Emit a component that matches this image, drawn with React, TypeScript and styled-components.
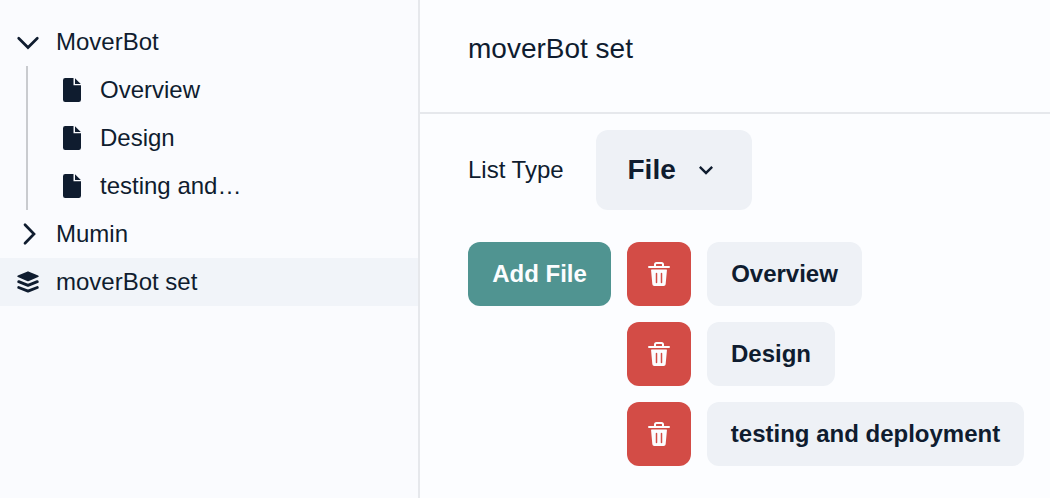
import React from 'react';
import styled, { createGlobalStyle, css } from 'styled-components';

const GlobalStyle = createGlobalStyle`
  * { box-sizing: border-box; }
  body {
    margin: 0;
    background: #fcfdff;
    color: #0f1c2f;
    font-family: "Liberation Sans", Arial, sans-serif;
    overflow: hidden;
  }
`;

const Layout = styled.div`
  display: flex;
  width: 100vw;
  height: 100vh;
`;

const Sidebar = styled.nav`
  flex: none;
  width: 420px;
  padding-top: 18px;
  border-right: 2px solid #e6e8ec;
  background: #fafbfe;
`;

const TreeRow = styled.div<{ $active?: boolean; $nested?: boolean }>`
  display: flex;
  align-items: center;
  gap: 16px;
  height: 48px;
  padding-left: ${({ $nested }) => ($nested ? '32px' : '16px')};
  font-size: 24px;
  line-height: 36px;
  ${({ $active }) => $active && css`background: #f1f4f9;`}
`;

const TreeIcon = styled.span`
  display: flex;
  justify-content: center;
  width: 24px;
`;

const Branch = styled.div`
  margin-left: 26px;
  border-left: 2px solid #c9cbcf;
`;

const TreeLabel = styled.span`
  white-space: nowrap;
`;

const Main = styled.main`
  flex: 1;
  min-width: 0;
`;

const Header = styled.header`
  height: 114px;
  padding: 28px 48px 0;
  border-bottom: 2px solid #e6e8ec;
`;

const Title = styled.h1`
  margin: 0;
  font-size: 28px;
  font-weight: 400;
  line-height: 42px;
`;

const Content = styled.section`
  padding: 16px 0 0 48px;
`;

const Field = styled.div`
  display: flex;
  align-items: center;
  gap: 32px;
  font-size: 24px;
`;

const Button = styled.button<{ $tone?: 'primary' | 'danger'; $large?: boolean; $width: number }>`
  display: flex;
  align-items: center;
  justify-content: center;
  flex: none;
  width: ${({ $width }) => $width}px;
  height: ${({ $large }) => ($large ? 80 : 64)}px;
  padding: 0;
  gap: 16px;
  border: 0;
  border-radius: 12px;
  font: 700 ${({ $large }) => ($large ? 28 : 24)}px "Liberation Sans", Arial, sans-serif;
  white-space: nowrap;
  color: ${({ $tone }) => ($tone ? '#fcfdff' : '#0f1c2f')};
  background: ${({ $tone }) =>
    $tone === 'primary' ? '#509491' : $tone === 'danger' ? '#d34c46' : '#eef1f6'};
`;

const FileArea = styled.div`
  display: flex;
  align-items: flex-start;
  gap: 16px;
  margin-top: 32px;
`;

const FileList = styled.div`
  display: flex;
  flex-direction: column;
  gap: 16px;
`;

const FileRow = styled.div`
  display: flex;
  gap: 16px;
`;

const Chevron = ({ right = false }: { right?: boolean }) => (
  <svg
    width="24"
    height="24"
    viewBox="0 0 24 24"
    fill="none"
    stroke="currentColor"
    strokeWidth="2.7"
    strokeLinecap="round"
  >
    <path d={right ? 'M9 2.7 18 12 9 21.3' : 'M2.7 8.3 12 17.5 21.3 8.3'} />
  </svg>
);

const DocumentIcon = () => (
  <svg width="18" height="24" viewBox="0 0 18 24" fill="currentColor">
    <path d="M2.2 0H10.5V7.3H18V21.8A2.2 2.2 0 0 1 15.8 24H2.2A2.2 2.2 0 0 1 0 21.8V2.2A2.2 2.2 0 0 1 2.2 0Z" />
    <path d="M12 .3 17.8 6H12Z" />
  </svg>
);

const LayersIcon = () => (
  <svg width="24" height="24" viewBox="0 0 24 24" stroke="currentColor" strokeLinejoin="round" strokeLinecap="round">
    <path d="M12 2.2 21.8 6.3 12 10.4 2.2 6.3Z" fill="currentColor" strokeWidth="1.7" />
    <path d="M2.7 11.7 12 15.3 21.3 11.7" fill="none" strokeWidth="2.9" />
    <path d="M2.7 17.5 12 21.1 21.3 17.5" fill="none" strokeWidth="2.9" />
  </svg>
);

const SelectArrow = () => (
  <svg width="28" height="28" viewBox="0 0 24 24" fill="currentColor">
    <path d="M16.59 8.59 12 13.17 7.41 8.59 6 10l6 6 6-6z" />
  </svg>
);

const Trash = () => (
  <svg width="24" height="24" viewBox="0 0 24 24" fill="currentColor">
    <path d="M19.452 7.5H4.547a.5.5 0 00-.5.545l1.287 14.136A2 2 0 007.326 24h9.347a2 2 0 001.992-1.819L19.95 8.045a.5.5 0 00-.129-.382.5.5 0 00-.369-.163zm-9.2 13a.75.75 0 01-1.5 0v-9a.75.75 0 011.5 0zm5 0a.75.75 0 01-1.5 0v-9a.75.75 0 011.5 0zM22 4h-4.75a.25.25 0 01-.25-.25V2.5A2.5 2.5 0 0014.5 0h-5A2.5 2.5 0 007 2.5v1.25a.25.25 0 01-.25.25H2a1 1 0 000 2h20a1 1 0 000-2zM9 3.75V2.5a.5.5 0 01.5-.5h5a.5.5 0 01.5.5v1.25a.25.25 0 01-.25.25h-5.5A.25.25 0 019 3.75z" />
  </svg>
);

const pages = ['Overview', 'Design', 'testing and…'];
const files = [
  { name: 'Overview', width: 155 },
  { name: 'Design', width: 128 },
  { name: 'testing and deployment', width: 317 },
];

export default function App() {
  return (
    <Layout>
      <GlobalStyle />
      <Sidebar>
        <TreeRow>
          <TreeIcon><Chevron /></TreeIcon>
          <TreeLabel>MoverBot</TreeLabel>
        </TreeRow>
        <Branch>
          {pages.map((page) => (
            <TreeRow key={page} $nested>
              <TreeIcon><DocumentIcon /></TreeIcon>
              <TreeLabel>{page}</TreeLabel>
            </TreeRow>
          ))}
        </Branch>
        <TreeRow>
          <TreeIcon><Chevron right /></TreeIcon>
          <TreeLabel>Mumin</TreeLabel>
        </TreeRow>
        <TreeRow $active>
          <TreeIcon><LayersIcon /></TreeIcon>
          <TreeLabel>moverBot set</TreeLabel>
        </TreeRow>
      </Sidebar>
      <Main>
        <Header>
          <Title>moverBot set</Title>
        </Header>
        <Content>
          <Field>
            <span>List Type</span>
            <Button $large $width={156}>File <SelectArrow /></Button>
          </Field>
          <FileArea>
            <Button $tone="primary" $width={143}>Add File</Button>
            <FileList>
              {files.map((file) => (
                <FileRow key={file.name}>
                  <Button $tone="danger" $width={64} aria-label="Delete"><Trash /></Button>
                  <Button $width={file.width}>{file.name}</Button>
                </FileRow>
              ))}
            </FileList>
          </FileArea>
        </Content>
      </Main>
    </Layout>
  );
}
